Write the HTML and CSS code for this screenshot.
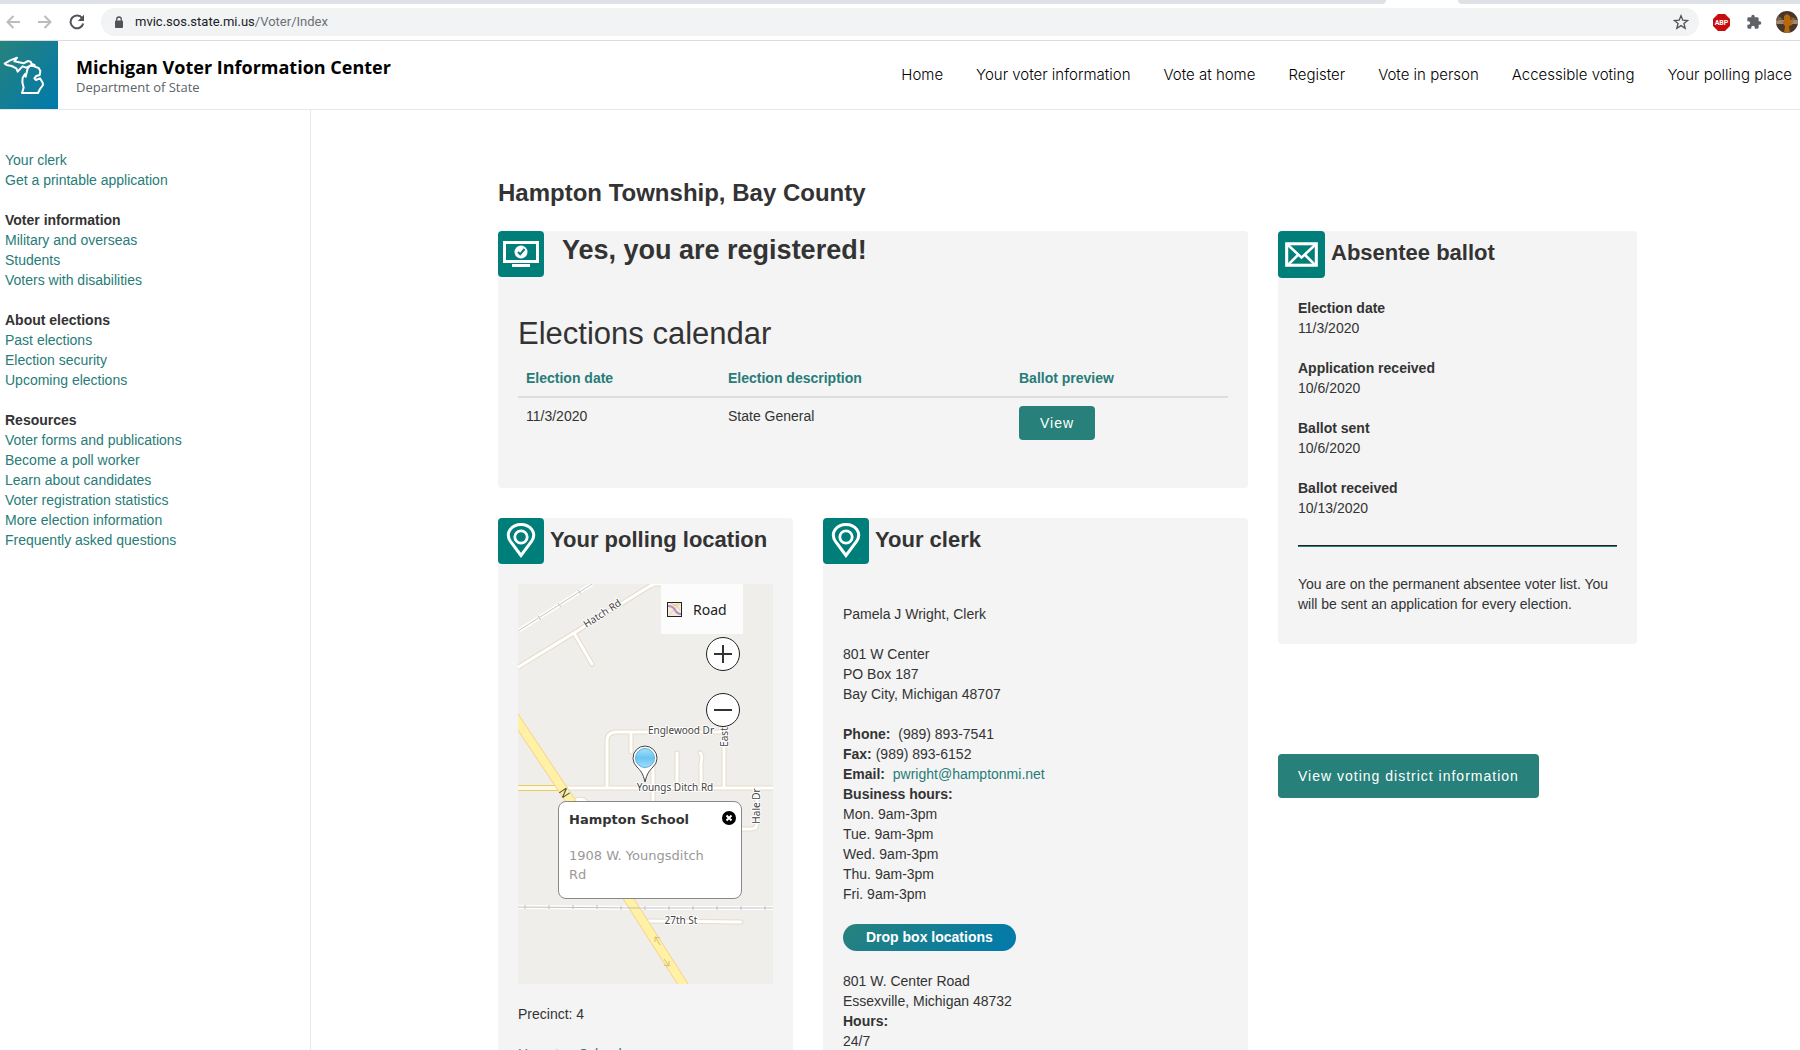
FILE: index.html
```html
<!DOCTYPE html>
<html lang="en">
<head>
<meta charset="utf-8">
<title>Michigan Voter Information Center</title>
<link rel="stylesheet" href="styles.css">
</head>
<body>
<div class="browser">
  <div class="tab-strip"><span class="tab-left"></span><span class="tab-right"></span></div>
  <div class="toolbar">
    <button class="tool" aria-label="Back"><svg width="14" height="14" viewBox="0 0 14 14" fill="none" stroke="#babcbe" stroke-width="2"><path d="M14 7H2M7.500 1L1.500 7l6 6"/></svg></button>
    <button class="tool" aria-label="Forward"><svg width="14" height="14" viewBox="0 0 14 14" fill="none" stroke="#babcbe" stroke-width="2"><path d="M0 7h12M6.500 1l6 6-6 6"/></svg></button>
    <button class="tool" aria-label="Reload"><svg width="16" height="16" viewBox="0 0 16 16"><path d="M13.200 4.200A6.400 6.400 0 1 0 14.200 9.500" fill="none" stroke="#505357" stroke-width="2"/><path d="M15 .8V7H8.800z" fill="#505357"/></svg></button>
    <div class="address">
      <svg width="10" height="13" viewBox="0 0 10 13"><rect x="1" y="4.500" width="8" height="7.500" rx="1" fill="#505357"/><path d="M2.700 5V3.300a2.300 2.300 0 0 1 4.600 0V5" fill="none" stroke="#505357" stroke-width="1.300"/></svg>
      <span class="url">mvic.sos.state.mi.us<span class="url-path">/Voter/Index</span></span>
      <svg class="star" width="16" height="16" viewBox="0 0 24 24" fill="none" stroke="#505357" stroke-width="2"><path d="M12 2.500l2.700 6.700 7.200.5-5.500 4.600 1.800 7L12 17.400l-6.200 3.900 1.800-7L2.100 9.700l7.200-.5z"/></svg>
    </div>
    <svg width="17" height="17" viewBox="0 0 17 17"><path d="M5 0h7l5 5v7l-5 5H5l-5-5V5z" fill="#c70d0d"/><text x="8.500" y="11" class="abp">ABP</text></svg>
    <svg width="16" height="16" viewBox="0 0 24 24"><path fill="#5f6368" d="M20.500 11H19V7a2 2 0 0 0-2-2h-4V3.500a2.500 2.500 0 0 0-5 0V5H4a2 2 0 0 0-2 2v3.800h1.500a2.700 2.700 0 0 1 0 5.400H2V20a2 2 0 0 0 2 2h3.800v-1.500a2.700 2.700 0 0 1 5.400 0V22H17a2 2 0 0 0 2-2v-4h1.500a2.500 2.500 0 0 0 0-5z"/></svg>
    <svg width="22" height="22" viewBox="0 0 22 22"><defs><clipPath id="face"><circle cx="11" cy="11" r="11"/></clipPath></defs><g clip-path="url(#face)"><rect width="22" height="22" fill="#4a3526"/><path d="M0 9h22v4H0z" fill="#9b8a78"/><path d="M2 5l5 3-6 2zM15 6l6 2-5 2z" fill="#77634e"/><path d="M8 5l3-2 3 2 1 5 3-3-2 7-3 1 1 7H8l1-7-4-5 3 1z" fill="#b5690f"/></g></svg>
  </div>
</div>

<div class="site">
  <header class="site-header">
    <svg class="logo" width="58" height="68" viewBox="0 123 174 204"><defs><linearGradient id="brand" x1="0" y1="0" x2="1" y2="1"><stop offset="0" stop-color="#27827c"/><stop offset="1" stop-color="#007aad"/></linearGradient></defs><rect y="123" width="174" height="204" fill="url(#brand)"/><g fill="none" stroke="#fff" stroke-width="6" stroke-linejoin="round"><path d="M14 191l15-9 22-9-8 11 14 3 14 3 13-7 8 2 3 7 9 3-17 4-9 4-10-4-8 8-7 8-4-10-14-7-15-3z"/><path d="M83 205l8-9 11 3 14 5 5 9-2 12-10 3-6 7 5 5 12-5 8 13 1 7-9 12-6 12H66l5-16-4-16 1-14 7-11 2 8z"/></g></svg>
    <div class="brand">
      <a class="brand-title" href="#">Michigan Voter Information Center</a>
      <span class="brand-sub">Department of State</span>
    </div>
    <nav class="main-nav">
      <a href="#">Home</a>
      <a href="#">Your voter information</a>
      <a href="#">Vote at home</a>
      <a href="#">Register</a>
      <a href="#">Vote in person</a>
      <a href="#">Accessible voting</a>
      <a href="#">Your polling place</a>
    </nav>
  </header>

  <div class="body">
    <aside class="sidebar">
      <section>
        <a href="#">Your clerk</a>
        <a href="#">Get a printable application</a>
      </section>
      <section>
        <h4>Voter information</h4>
        <a href="#">Military and overseas</a>
        <a href="#">Students</a>
        <a href="#">Voters with disabilities</a>
      </section>
      <section>
        <h4>About elections</h4>
        <a href="#">Past elections</a>
        <a href="#">Election security</a>
        <a href="#">Upcoming elections</a>
      </section>
      <section>
        <h4>Resources</h4>
        <a href="#">Voter forms and publications</a>
        <a href="#">Become a poll worker</a>
        <a href="#">Learn about candidates</a>
        <a href="#">Voter registration statistics</a>
        <a href="#">More election information</a>
        <a href="#">Frequently asked questions</a>
      </section>
    </aside>

    <main class="content">
      <h1>Hampton Township, Bay County</h1>
      <div class="columns">
        <div class="primary">
          <section class="card">
            <div class="card-head registered">
              <svg class="badge" width="46" height="46" viewBox="0 0 46 46"><rect width="46" height="46" rx="4" fill="#007f7a"/><rect x="6.500" y="11.500" width="33" height="19" fill="none" stroke="#fff" stroke-width="3"/><path d="M14 33h18v3H14z" fill="#fff"/><circle cx="23" cy="21" r="6.500" fill="#fff"/><path d="M20 21l2.200 2.300L26.500 18" fill="none" stroke="#007f7a" stroke-width="2"/></svg>
              <h2 class="status">Yes, you are registered!</h2>
            </div>
            <div class="card-body calendar">
              <h2 class="calendar-title">Elections calendar</h2>
              <table>
                <thead><tr><th class="col-date">Election date</th><th class="col-desc">Election description</th><th>Ballot preview</th></tr></thead>
                <tbody><tr><td>11/3/2020</td><td>State General</td><td><button class="btn btn-small">View</button></td></tr></tbody>
              </table>
            </div>
          </section>

          <div class="pair">
            <section class="card">
              <div class="card-head">
                <svg class="badge" width="46" height="46" viewBox="0 0 46 46"><rect width="46" height="46" rx="4" fill="#007f7a"/><g fill="none" stroke="#fff"><path d="M23 37.500L12.500 23.500C6.500 14.500 14 6.500 23 6.500s16.500 8 10.500 17z" stroke-width="3"/><circle cx="23" cy="19" r="6.200" stroke-width="2.800"/></g></svg>
                <h3>Your polling location</h3>
              </div>
              <div class="card-body">
                <div class="map">
                  <svg class="map-art" viewBox="0 0 255 400" preserveAspectRatio="xMidYMid slice">
                    <rect width="255" height="400" fill="#f0eeea"/>
                    <g fill="none" stroke-linejoin="round">
                      <path d="M0 47L74 0" stroke="#fff" stroke-width="4"/>
                      <path d="M0 47L74 0" stroke="#c4c2c6"/>
                      <path d="M20 32l3 4M40 19l3 4M60 6l3 4" stroke="#c4c2c6"/>
                      <path d="M0 323l122 1h133" stroke="#fff" stroke-width="4"/>
                      <g stroke="#e4dcc8" stroke-width="5" stroke-linecap="round">
                        <path d="M-3 85L56 49 132 2l5-2h34M56 49l18 31"/>
                        <path d="M0 204h255M89 204v-47q0-9 10-9h107v56M113 148v20M159 169v35M182 169q3 2 1 10v25M135 180v40M239 205v34q0 6-6 6h-11M54 218q10-6 16 2"/>
                        <path d="M131 337l92 1"/>
                      </g>
                      <g stroke="#fff" stroke-width="3" stroke-linecap="round">
                        <path d="M-3 85L56 49 132 2l5-2h34M56 49l18 31"/>
                        <path d="M0 204h255M89 204v-47q0-9 10-9h107v56M113 148v20M159 169v35M182 169q3 2 1 10v25M135 180v40M239 205v34q0 6-6 6h-11M54 218q10-6 16 2"/>
                        <path d="M131 337l92 1"/>
                      </g>
                      <path d="M0 204h42" stroke="#eac96a" stroke-width="6"/>
                      <path d="M0 204h42" stroke="#fffbe0" stroke-width="4"/>
                      <path d="M-4 132L54 219 110 314l58 91" stroke="#f8d48c" stroke-width="10"/>
                      <path d="M-4 132L54 219 110 314l58 91" stroke="#fff2a6" stroke-width="8"/>
                      <path d="M0 323l122 1h133" stroke="#c0bec2"/>
                      <path d="M7 321v4M31 321v4M55 321v4M79 321v4M103 322v4M127 322v4M151 322v4M175 322v4M199 322v4M223 322v4M247 322v4" stroke="#c0bec2"/>
                      <path d="M142 361l-4-7M137 358v-5l5 1M146 375l5 7M151 377v5l-5-1" stroke="#d8b878"/>
                    </g>
                    <g class="map-labels">
                      <text x="84" y="33" transform="rotate(-33 84 29)">Hatch Rd</text>
                      <text x="163" y="150">Englewood Dr</text>
                      <text x="206" y="157" transform="rotate(-90 206 153)">East</text>
                      <text x="157" y="207">Youngs Ditch Rd</text>
                      <text x="238" y="226" transform="rotate(-90 238 222)">Hale Dr</text>
                      <text x="163" y="340">27th St</text>
                      <text class="map-route" x="46" y="213" transform="rotate(56 46 209)">N</text>
                    </g>
                    <defs><linearGradient id="pin" x1="0" y1="0" x2="0" y2="1"><stop offset="0" stop-color="#a8dff8"/><stop offset=".5" stop-color="#66c4f2"/><stop offset="1" stop-color="#a4dcf8"/></linearGradient></defs>
                    <path d="M127 198c-2-9-5-12-8-15a12 12 0 1 1 16 0c-3 3-6 6-8 15z" fill="#fff" stroke="#444"/>
                    <circle cx="127" cy="174" r="9.500" fill="url(#pin)" stroke="#5ab0dc"/>
                  </svg>
                  <button class="map-type"><svg width="15" height="15" viewBox="0 0 15 15"><rect x=".5" y=".5" width="14" height="14" fill="#f2ecdc" stroke="#222"/><path d="M2 13L13 2M8 2l5 6" stroke="#e0d0ac"/><path d="M1 4q5 0 7 4t6 4" fill="none" stroke="#b58bc8" stroke-width="2"/><path d="M4 1l4 3 4-3" fill="none" stroke="#f4be68"/></svg>Road</button>
                  <div class="map-zoom">
                    <button aria-label="Zoom in"><svg width="18" height="18" viewBox="0 0 18 18"><path d="M9 0v18M0 9h18" stroke="#333" stroke-width="2"/></svg></button>
                    <button aria-label="Zoom out"><svg width="18" height="18" viewBox="0 0 18 18"><path d="M0 9h18" stroke="#333" stroke-width="2"/></svg></button>
                  </div>
                  <div class="popup">
                    <strong>Hampton School</strong>
                    <p>1908 W. Youngsditch Rd</p>
                    <button class="popup-close" aria-label="Close"><svg width="14" height="14" viewBox="0 0 14 14"><circle cx="7" cy="7" r="7"/><path d="M4.500 4.500l5 5m0-5l-5 5" stroke="#fff" stroke-width="2"/></svg></button>
                  </div>
                </div>
                <p class="block">Precinct: 4</p>
                <p class="block"><a href="#">Hampton School</a></p>
              </div>
            </section>

            <section class="card">
              <div class="card-head">
                <svg class="badge" width="46" height="46" viewBox="0 0 46 46"><rect width="46" height="46" rx="4" fill="#007f7a"/><g fill="none" stroke="#fff"><path d="M23 37.500L12.500 23.500C6.500 14.500 14 6.500 23 6.500s16.500 8 10.500 17z" stroke-width="3"/><circle cx="23" cy="19" r="6.200" stroke-width="2.800"/></g></svg>
                <h3>Your clerk</h3>
              </div>
              <div class="card-body">
                <p class="block">Pamela J Wright, Clerk</p>
                <p class="block">801 W Center<br>PO Box 187<br>Bay City, Michigan 48707</p>
                <p class="block"><b>Phone:</b>&nbsp; (989) 893-7541<br><b>Fax:</b> (989) 893-6152<br><b>Email:</b>&nbsp; <a href="#">pwright@hamptonmi.net</a><br><b>Business hours:</b><br>Mon. 9am-3pm<br>Tue. 9am-3pm<br>Wed. 9am-3pm<br>Thu. 9am-3pm<br>Fri. 9am-3pm</p>
                <button class="pill">Drop box locations</button>
                <p class="block">801 W. Center Road<br>Essexville, Michigan 48732<br><b>Hours:</b><br>24/7</p>
              </div>
            </section>
          </div>
        </div>

        <div class="secondary">
          <section class="card">
            <div class="card-head">
              <svg class="badge" width="47" height="47" viewBox="0 0 46 46"><rect width="46" height="46" rx="4" fill="#007f7a"/><g fill="none" stroke="#fff"><rect x="8.500" y="12.500" width="29" height="21" stroke-width="3"/><path d="M9.500 13.500L23 26l13.500-12.500M10 33l9-9M36 33l-9-9" stroke-width="2.500"/></g></svg>
              <h3>Absentee ballot</h3>
            </div>
            <div class="card-body absentee">
              <dl>
                <dt>Election date</dt><dd>11/3/2020</dd>
                <dt>Application received</dt><dd>10/6/2020</dd>
                <dt>Ballot sent</dt><dd>10/6/2020</dd>
                <dt>Ballot received</dt><dd>10/13/2020</dd>
              </dl>
              <hr>
              <p>You are on the permanent absentee voter list. You will be sent an application for every election.</p>
            </div>
          </section>
          <button class="btn btn-large">View voting district information</button>
        </div>
      </div>
    </main>
  </div>
</div>
</body>
</html>
```
FILE: styles.css
```css
* { box-sizing: border-box; }

body {
  margin: 0;
  height: 100vh;
  display: flex;
  flex-direction: column;
  overflow: hidden;
  background: #fff;
  color: #333;
  font: 14px/20px "Liberation Sans", Arial, sans-serif;
}

h1, h2, h3, h4, p, dl, dd { margin: 0; }
a { color: #277c78; text-decoration: none; }
button { font: inherit; border: 0; padding: 0; background: none; cursor: pointer; }
svg { flex: none; display: block; }

/* Browser window */
.browser { flex: none; border-bottom: 1px solid #dadce0; }
.tab-strip { display: flex; justify-content: space-between; height: 4px; }
.tab-left, .tab-right { background: #dee1e6; }
.tab-left { width: 77%; border-bottom-right-radius: 4px; }
.tab-right { width: 19%; border-bottom-left-radius: 4px; }
.toolbar { display: flex; align-items: center; gap: 16px; height: 36px; padding: 0 2px 0 5px; }
.tool { display: grid; place-items: center; width: 16px; }
.address {
  flex: 1;
  display: flex;
  align-items: center;
  gap: 11px;
  height: 28px;
  padding: 0 10px 0 13px;
  border-radius: 14px;
  background: #f1f3f4;
}
.address + svg { margin-left: -2px; }
.toolbar > svg:last-child { margin-left: -2px; }
.url { font: 13px/20px Roboto, sans-serif; color: #202124; }
.url-path { color: #6c7075; }
.star { margin-left: auto; }
.abp { font: bold 7px Roboto, sans-serif; fill: #fff; text-anchor: middle; }

/* Site header */
.site { flex: 1; min-height: 0; display: flex; flex-direction: column; overflow: hidden; }
.site-header { flex: none; display: flex; align-items: center; border-bottom: 1px solid #e7e7e7; padding-right: 8px; }
.brand { display: flex; flex-direction: column; margin-left: 18px; font-family: "Open Sans", sans-serif; }
.brand-title { font-size: 18px; line-height: 24px; font-weight: 700; color: #000; }
.brand-sub { font-size: 13px; line-height: 16px; color: #5a6469; }
.main-nav { display: flex; gap: 33px; margin-left: auto; }
.main-nav a { font: 300 15px/20px Inter, sans-serif; color: #000; white-space: nowrap; }

.body { flex: 1; min-height: 0; display: flex; }
.sidebar {
  flex: none;
  width: 311px;
  display: flex;
  flex-direction: column;
  gap: 20px;
  padding: 40px 5px;
  border-right: 1px solid #e7e7e7;
}
.sidebar section { display: flex; flex-direction: column; align-items: flex-start; }
.sidebar h4 { font-size: 14px; line-height: 20px; }

/* Main content */
.content { flex: 1; padding: 68px 163px 0 187px; }
h1 { font-size: 24px; line-height: 30px; margin-bottom: 23px; }
.columns { display: grid; grid-template-columns: 750fr 359fr; gap: 30px; align-items: start; }
.primary { display: grid; gap: 30px; }
.pair { display: grid; grid-template-columns: 295fr 425fr; gap: 30px; }
.card { background: #f4f4f4; border-radius: 4px; }
.card-head { display: flex; align-items: flex-start; gap: 6px; }
.card-head h3 { padding-top: 9px; font-size: 22px; line-height: 26px; }
.registered { gap: 18px; }
.card-head .status { font-size: 27px; line-height: 38px; }
.card-body { padding: 20px 20px; }

.calendar { padding: 39px 20px 40px; }
.calendar-title { font-size: 31px; line-height: 36px; font-weight: 400; margin-bottom: 8px; }
table { width: 100%; table-layout: fixed; border-collapse: separate; border-spacing: 0; }
th, td { padding: 8px; text-align: left; vertical-align: top; }
th { color: #277c78; border-bottom: 2px solid #ddd; }
.col-date { width: 202px; }
.col-desc { width: 291px; }

.btn { display: block; border-radius: 4px; background: #27807a; color: #fff; letter-spacing: 1px; }
.btn-small { width: 76px; height: 34px; }
.btn-large { margin-top: 110px; height: 44px; padding: 0 20px; }

.block { margin-top: 20px; }
.pair .card-body > p:first-child { margin-top: 20px; }

.pill {
  display: block;
  margin-top: 20px;
  padding: 3px 23px 4px;
  border-radius: 14px;
  background: linear-gradient(135deg, #27827c, #007aad);
  color: #fff;
  font-weight: bold;
}

.absentee { padding-bottom: 30px; }
dt { font-weight: bold; }
dd { margin-bottom: 20px; }
hr { height: 2px; margin: 27px 0; border: 0; border-top: 1px solid #222; background: #27807a; }

/* Map */
.map { position: relative; height: 400px; overflow: hidden; }
.map-art { width: 100%; height: 100%; }
.map-labels { font: 10px "Noto Sans", sans-serif; fill: #444; text-anchor: middle; paint-order: stroke; stroke: #fff; stroke-width: 2px; stroke-linejoin: round; }
.map-route { font-size: 12px; stroke: none; }
.map-type {
  position: absolute;
  top: 0;
  right: 30px;
  display: flex;
  align-items: center;
  gap: 11px;
  width: 82px;
  height: 50px;
  padding-left: 6px;
  background: #fcfcfc;
  color: #222;
  font: 14px "Noto Sans", sans-serif;
}
.map-zoom { position: absolute; top: 53px; right: 33px; display: grid; gap: 22px; }
.map-zoom button { display: grid; place-items: center; width: 34px; height: 34px; border: 1px solid #222; border-radius: 50%; background: #fff; }
.popup {
  position: absolute;
  top: 217px;
  left: 40px;
  width: 184px;
  height: 98px;
  padding: 8px 24px 8px 10px;
  border: 1px solid #888;
  border-radius: 8px;
  background: #fff;
  font: 13px/19px "DejaVu Sans", sans-serif;
  color: #999;
}
.popup strong { display: block; margin-bottom: 17px; color: #333; }
.popup-close { position: absolute; top: 9px; right: 5px; }
```
